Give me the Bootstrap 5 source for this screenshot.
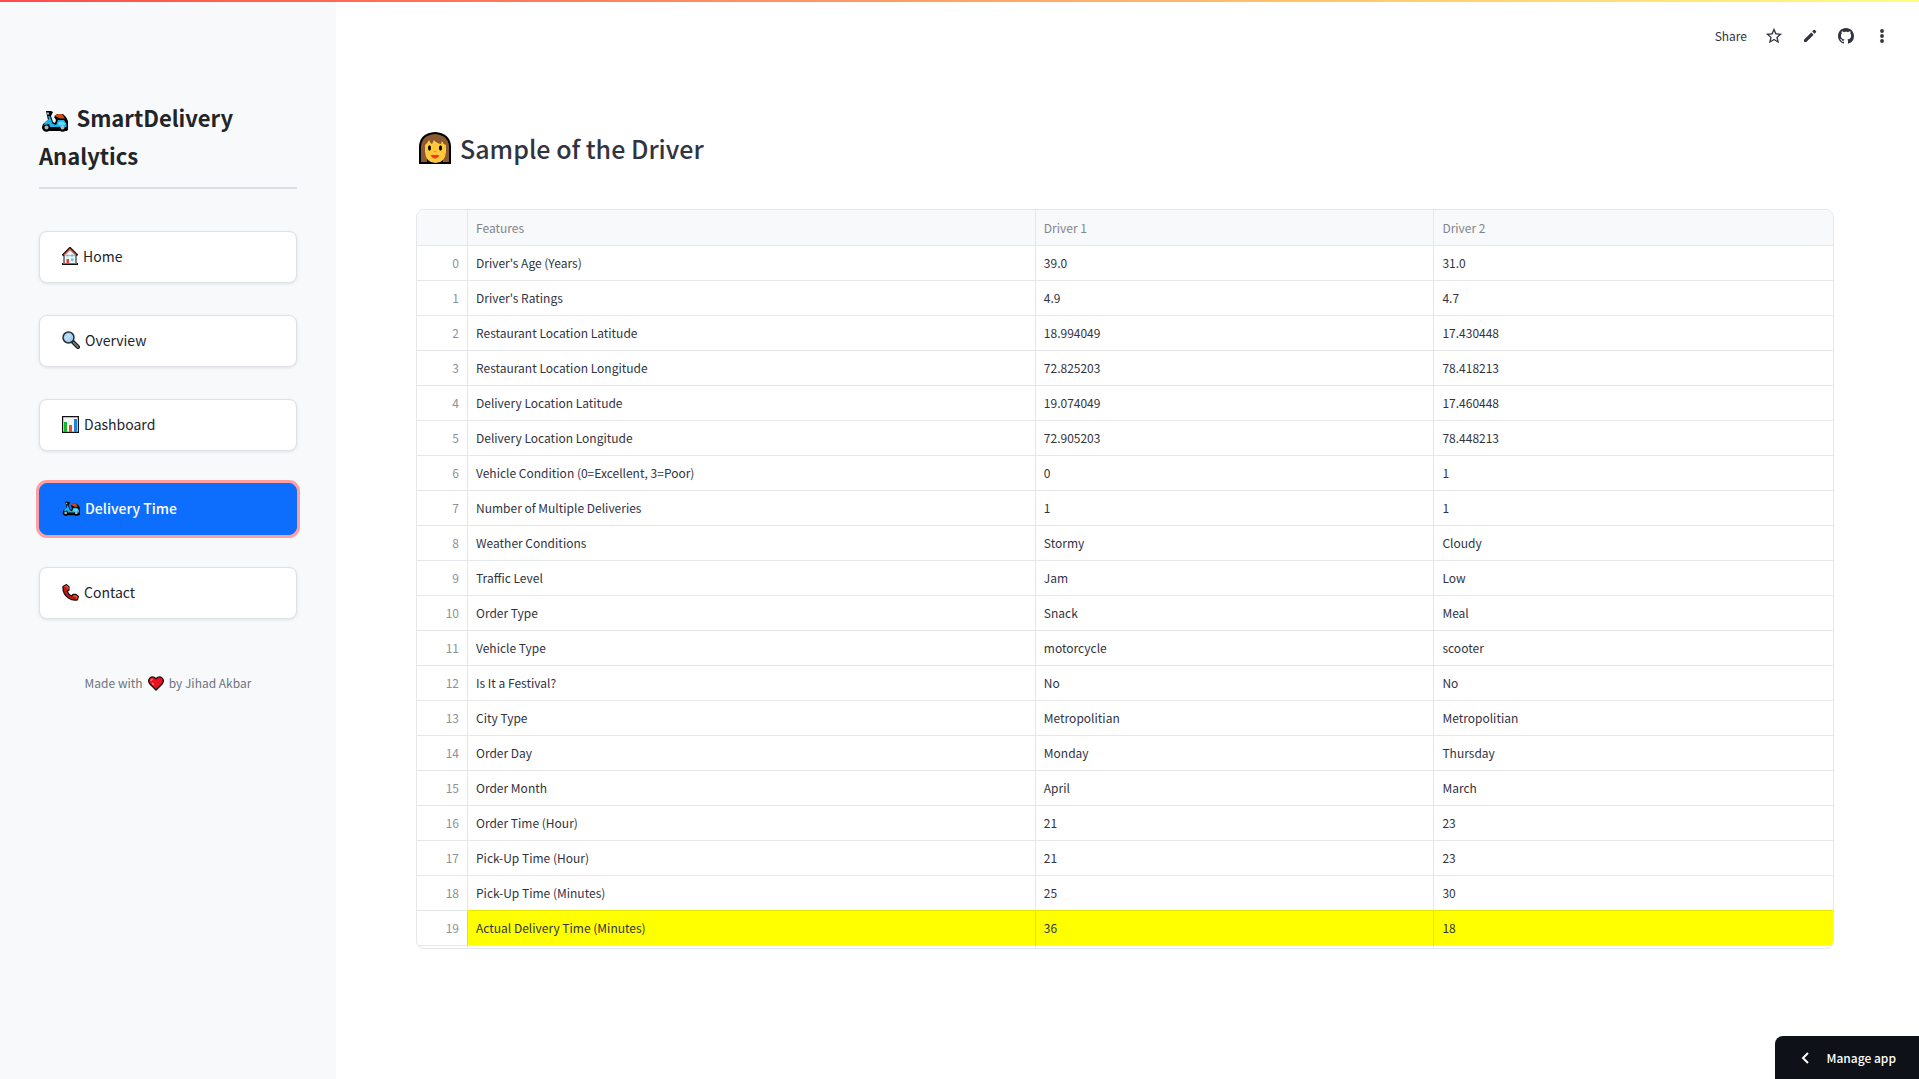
<!DOCTYPE html>
<html lang="en">
<head>
<meta charset="utf-8">
<meta name="viewport" content="width=device-width, initial-scale=1">
<title>SmartDelivery Analytics</title>
<link href="https://cdn.jsdelivr.net/npm/bootstrap@5.3.0/dist/css/bootstrap.min.css" rel="stylesheet">
<style>
  body { font-family: "Noto Sans CJK SC", "Noto Sans", sans-serif; font-size: 14px; line-height: 24px; color: #31333f; background: #fff; }
  .top-strip { height: 2px; background: linear-gradient(90deg, #ff4b4b, #fffd80); z-index: 1040; }
  .side-panel { width: 336px; padding: 98px 39px 40px; background: #f8f9fb; }
  .brand-title { font-size: 22px; line-height: 38px; font-weight: 700; color: #212529; margin: 0 0 42px; padding-bottom: 13px; border-bottom: 2px solid #dedfe5; }
  .brand-title svg { vertical-align: -5px; }
  .side-nav { gap: 32px; }
  .nav-btn { height: 52px; padding: 0 22px 2px; border: 1px solid #dee2e6; border-radius: 8px; background: #fff; color: #212529; font-size: 14px; text-align: left; gap: 5px; box-shadow: 0 1px 3px rgba(0,0,0,.1); }
  .nav-btn.current { background: #0d6efd; border-color: #0d6efd; color: #fff; font-weight: 500; box-shadow: 0 0 0 3px #ff9fa2; }
  .side-foot { margin-top: 52px; font-size: 12px; color: #6c757d; gap: 5px; }
  .main-area { padding: 16px 85px 40px 80px; }
  .tool-row { height: 40px; margin-right: -57px; gap: 18px; font-size: 12px; }
  .tool-row button { border: 0; background: none; padding: 0; color: #31333f; line-height: 18px; }
  .tool-row svg { display: block; }
  .page-title { font-size: 25px; line-height: 34px; font-weight: 500; color: #31333f; margin: 75px 0 44px; gap: 8px; }
  .grid-frame { border: 1px solid #e6e7ea; border-radius: 8px; overflow: hidden; }
  .data-grid { width: 100%; table-layout: fixed; border-collapse: separate; border-spacing: 0; font-size: 12px; line-height: 18px; }
  .data-grid th, .data-grid td { height: 35px; padding: 0 8px; border-bottom: 1px solid #e6e7ea; border-right: 1px solid #e6e7ea; font-weight: 400; }
  .data-grid th:last-child, .data-grid td:last-child { border-right: 0; }
  .data-grid thead th { height: 36px; background: #f8f9fb; color: #83858c; }
  .data-grid tbody th { text-align: right; color: #8e9097; }
  .data-grid tfoot td { height: 2px; border-bottom: 0; }
  .data-grid .hit td { background: #ff0; border-color: #e6e600; border-bottom-color: #e6e7ea; }
  .data-grid .hit th { border-right-color: #e6e600; }
  .data-grid .before-hit td { border-bottom-color: #e6e600; }
  .col-idx { width: 51px; }
  .col-val { width: 28.15%; }
  .manage-btn { height: 43px; padding: 0 23px 0 24px; border: 0; border-radius: 8px 0 0 0; background: #0e1117; color: #fff; font-size: 12px; font-weight: 500; gap: 16px; }
</style>
<script src="https://cdn.jsdelivr.net/npm/bootstrap@5.3.0/dist/js/bootstrap.bundle.min.js"></script>
</head>
<body>
<svg width="0" height="0" class="position-absolute" aria-hidden="true">
  <symbol id="scooter" viewBox="0 0 27 22">
    <path d="M5 1h5l2 1-2 4 2 6 2 1 1-3-2-3 3-3h6l3 3 3 6v5l-2 3H4l-3-3 1-4 5-4z" fill="#000"/>
    <circle cx="5.500" cy="17.500" r="4.300" fill="#000"/><circle cx="21.500" cy="17.500" r="4.300" fill="#000"/>
    <path d="M7 6l2 .5 2.500 7L15 15l2-5h6l2.500 4v3H9l-1-3-5 1 1-3 4-3z" fill="#18b4ee"/>
    <path d="M13 5.500L17 4h4l3 4.500h-5z" fill="#d04b16"/>
    <path d="M6 2.500h2v2H6z" fill="#a9b4ba"/>
    <ellipse cx="20.500" cy="13.500" rx="3.400" ry="2" fill="#63dcfa"/>
    <circle cx="5.500" cy="17.600" r="2" fill="#b6b6b6"/><circle cx="21.500" cy="17.600" r="2" fill="#b6b6b6"/>
  </symbol>
</svg>
<div class="top-strip fixed-top"></div>
<div class="d-flex min-vh-100">
  <aside class="side-panel flex-shrink-0">
    <h2 class="brand-title"><svg width="33" height="22" viewBox="-2 0 33 22" aria-hidden="true"><use href="#scooter" width="27" height="22"/></svg>&thinsp;SmartDelivery Analytics</h2>
    <nav class="side-nav d-flex flex-column">
      <button type="button" class="nav-btn d-flex align-items-center">
        <svg width="16" height="18" viewBox="0 0 16 18" aria-hidden="true"><path d="M2 8h12v9H2z" fill="#eef2f5" stroke="#111"/><path d="M.5 8.500L8 1l7.500 7.500" fill="#eef2f5" stroke="#111" stroke-width="2.200"/><path d="M2 8l6-5.800L14 8" fill="none" stroke="#e0563f" stroke-width="1.200"/><path d="M4.500 7.500h2v2h-2zM9 7.500h2.500v2H9zM9 11.500h2.500v2.500H9z" fill="#55cdf2"/><path d="M4.500 12H7v4.500H4.500z" fill="#e8452c"/><path d="M0 16h16v2H0z" fill="#111"/><path d="M1 16h14v1H1z" fill="#25a52d"/></svg>Home</button>
      <button type="button" class="nav-btn d-flex align-items-center">
        <svg width="18" height="18" viewBox="0 0 18 18" aria-hidden="true"><path d="M10.500 10.500l5.500 5.500" stroke="#16191b" stroke-width="4" stroke-linecap="round"/><path d="M11.500 11.500l4.500 4.500" stroke="#68777d" stroke-width="1.800" stroke-linecap="round"/><circle cx="6.500" cy="6.500" r="5.500" fill="#a3cff3" stroke="#26323a" stroke-width="1.500"/><path d="M3 7l4-4M4 9l5-5" stroke="#c8e4fb" stroke-width="1.300"/></svg>Overview</button>
      <button type="button" class="nav-btn d-flex align-items-center">
        <svg width="17" height="17" viewBox="0 0 17 17" aria-hidden="true"><path d="M.6.600h15.800v15.800H.6z" fill="#f2f3f4" stroke="#111" stroke-width="1.200"/><path d="M2 6h3v10H2z" fill="#16b52a"/><path d="M7 9h3v7H7z" fill="#ef4630"/><path d="M12 3h3v13h-3z" fill="#1d83d5"/></svg>Dashboard</button>
      <button type="button" class="nav-btn current d-flex align-items-center" aria-current="page">
        <svg width="18" height="15" aria-hidden="true"><use href="#scooter"/></svg>Delivery Time</button>
      <button type="button" class="nav-btn d-flex align-items-center">
        <svg width="17" height="17" viewBox="0 0 17 17" aria-hidden="true"><path d="M1 2.500L4.500.700 7 3v3L5.200 7.500q1.300 3.200 4.300 4.500L11 10.500h3l2.400 2-1 3.300q-4.400 1.200-9-1.800Q.4 9.800 1 2.500z" fill="#c01b12" stroke="#141010" stroke-width="1.300" stroke-linejoin="round"/><path d="M2.500 3l2-1L6 3.500v1.700M11.500 12l2-.3 1.500 1.200-.6 1.700" fill="none" stroke="#ee5a36" stroke-width="1.300"/></svg>Contact</button>
    </nav>
    <p class="side-foot d-flex justify-content-center align-items-center mb-0"><span>Made with</span>
      <svg width="16" height="15" viewBox="0 0 16 15" role="img" aria-label="love"><path d="M8 14L1.500 7.500Q-.4 4.300 2 1.900 5-.400 8 2.800 11-.400 14 1.900q2.400 2.400.5 5.600z" fill="#e81224" stroke="#1b0c0e" stroke-width="1.300"/><path d="M3 5q0-1.500 1.700-2M4 7l2 2" stroke="#f7705f" stroke-width="1.400" fill="none"/></svg>
      <span>by Jihad Akbar</span></p>
  </aside>
  <main class="main-area flex-grow-1">
    <div class="tool-row d-flex justify-content-end align-items-center">
      <button type="button">Share</button>
      <button type="button" aria-label="Favorite"><svg width="18" height="18" viewBox="1 1 22 22" fill="currentColor"><path d="M22 9.240l-7.190-.62L12 2 9.190 8.630 2 9.240l5.460 4.730L5.820 21 12 17.270 18.180 21l-1.630-7.030L22 9.240zM12 15.400l-3.760 2.270 1-4.280-3.320-2.880 4.380-.38L12 6.100l1.710 4.040 4.380.38-3.320 2.880 1 4.280L12 15.400z"/></svg></button>
      <button type="button" aria-label="Edit"><svg width="18" height="18" viewBox="0 0 24 24" fill="currentColor"><path d="M4 16.900V20h3.100L16.800 10.300l-3.100-3.100zM20 7.100a1.400 1.400 0 0 0 0-1.700L18.600 4a1.400 1.400 0 0 0-1.900 0l-1.800 1.900L18.100 9z"/></svg></button>
      <button type="button" aria-label="View source"><svg width="18" height="18" viewBox="-1 -1 18 18" fill="currentColor"><path d="M8 0C3.580 0 0 3.580 0 8c0 3.540 2.290 6.530 5.470 7.590.4.070.55-.17.55-.38 0-.19-.01-.82-.01-1.490-2.010.37-2.530-.49-2.690-.94-.09-.23-.48-.94-.82-1.130-.28-.15-.68-.52-.01-.53.63-.01 1.080.58 1.230.82.720 1.210 1.870.87 2.330.66.070-.52.280-.87.510-1.070-1.780-.2-3.640-.89-3.640-3.950 0-.87.310-1.590.82-2.150-.08-.2-.36-1.020.08-2.120 0 0 .67-.21 2.200.82.640-.18 1.320-.27 2-.27s1.360.09 2 .27c1.530-1.040 2.200-.82 2.200-.82.440 1.100.160 1.920.080 2.120.510.560.820 1.270.820 2.150 0 3.070-1.870 3.750-3.650 3.950.290.250.540.730.540 1.480 0 1.070-.010 1.930-.010 2.200 0 .210.150.460.550.380A8.010 8.010 0 0 0 16 8c0-4.420-3.580-8-8-8z"/></svg></button>
      <button type="button" aria-label="More options"><svg width="18" height="18" viewBox="0 0 18 18" fill="currentColor"><circle cx="9" cy="4" r="1.900"/><circle cx="9" cy="9" r="1.900"/><circle cx="9" cy="14" r="1.900"/></svg></button>
    </div>
    <h1 class="page-title d-flex align-items-center">
      <svg width="36" height="34" viewBox="-2 0 36 34" aria-hidden="true"><path d="M1 33V15Q2 2 17 1q15 1 16 14v18z" fill="#000"/><path d="M3 31V15Q4 4 17 3q13 1 14 12v16h-6V20H9v11z" fill="#8c5a31"/><path d="M7 14q2-1 4-5 1 3 3 4l2-4q2 3 7 4l1-3q1 3 4 4v7q-1 11-10.500 11T7 21z" fill="#ffc83d"/><ellipse cx="11.500" cy="17" rx="1.500" ry="2.800" fill="#000"/><ellipse cx="22.500" cy="17" rx="1.500" ry="2.800" fill="#000"/><path d="M15 20h4l-2 1.500z" fill="#ff8257"/><path d="M12.500 24.500l3-.7 1.500.4 1.500-.4 3 .7q-2 3-4.500 3t-4.500-3z" fill="#f03a17"/></svg>
      Sample of the Driver</h1>
    <div class="grid-frame">
      <table class="data-grid">
        <colgroup><col class="col-idx"><col><col class="col-val"><col class="col-val"></colgroup>
        <thead><tr><th></th><th scope="col">Features</th><th scope="col">Driver 1</th><th scope="col">Driver 2</th></tr></thead>
        <tbody>
          <tr><th scope="row">0</th><td>Driver's Age (Years)</td><td>39.0</td><td>31.0</td></tr>
          <tr><th scope="row">1</th><td>Driver's Ratings</td><td>4.9</td><td>4.7</td></tr>
          <tr><th scope="row">2</th><td>Restaurant Location Latitude</td><td>18.994049</td><td>17.430448</td></tr>
          <tr><th scope="row">3</th><td>Restaurant Location Longitude</td><td>72.825203</td><td>78.418213</td></tr>
          <tr><th scope="row">4</th><td>Delivery Location Latitude</td><td>19.074049</td><td>17.460448</td></tr>
          <tr><th scope="row">5</th><td>Delivery Location Longitude</td><td>72.905203</td><td>78.448213</td></tr>
          <tr><th scope="row">6</th><td>Vehicle Condition (0=Excellent, 3=Poor)</td><td>0</td><td>1</td></tr>
          <tr><th scope="row">7</th><td>Number of Multiple Deliveries</td><td>1</td><td>1</td></tr>
          <tr><th scope="row">8</th><td>Weather Conditions</td><td>Stormy</td><td>Cloudy</td></tr>
          <tr><th scope="row">9</th><td>Traffic Level</td><td>Jam</td><td>Low</td></tr>
          <tr><th scope="row">10</th><td>Order Type</td><td>Snack</td><td>Meal</td></tr>
          <tr><th scope="row">11</th><td>Vehicle Type</td><td>motorcycle</td><td>scooter</td></tr>
          <tr><th scope="row">12</th><td>Is It a Festival?</td><td>No</td><td>No</td></tr>
          <tr><th scope="row">13</th><td>City Type</td><td>Metropolitian</td><td>Metropolitian</td></tr>
          <tr><th scope="row">14</th><td>Order Day</td><td>Monday</td><td>Thursday</td></tr>
          <tr><th scope="row">15</th><td>Order Month</td><td>April</td><td>March</td></tr>
          <tr><th scope="row">16</th><td>Order Time (Hour)</td><td>21</td><td>23</td></tr>
          <tr><th scope="row">17</th><td>Pick-Up Time (Hour)</td><td>21</td><td>23</td></tr>
          <tr class="before-hit"><th scope="row">18</th><td>Pick-Up Time (Minutes)</td><td>25</td><td>30</td></tr>
          <tr class="hit"><th scope="row">19</th><td>Actual Delivery Time (Minutes)</td><td>36</td><td>18</td></tr>
        </tbody>
        <tfoot aria-hidden="true"><tr><td></td><td></td><td></td><td></td></tr></tfoot>
      </table>
    </div>
  </main>
</div>
<button type="button" class="manage-btn position-fixed bottom-0 end-0 d-flex align-items-center">
  <svg width="12" height="14" viewBox="0 0 12 14" fill="none" stroke="#fff" stroke-width="2" aria-hidden="true"><path d="M9 2L4 7l5 5"/></svg>Manage app</button>
</body>
</html>
